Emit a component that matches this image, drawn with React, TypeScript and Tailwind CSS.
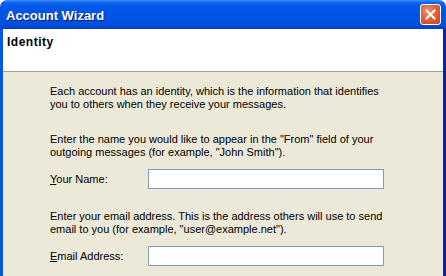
import React from "react";

function CloseButton() {
  return (
    <div className="w-[21px] h-[21px] rounded-[3px] border border-white bg-[radial-gradient(circle_at_35%_30%,#f0906c_0%,#e2603a_45%,#c8431f_100%)] flex items-center justify-center">
      <svg width="11" height="11" viewBox="0 0 11 11">
        <path d="M1.5 1.5 L9.5 9.5 M9.5 1.5 L1.5 9.5" stroke="white" strokeWidth="2.2" strokeLinecap="square" />
      </svg>
    </div>
  );
}

export default function App() {
  return (
    <div className="w-[446px] h-[276px] overflow-hidden bg-white font-['Liberation_Sans',Arial,sans-serif] text-black">
      <div className="flex flex-col h-full">
        <div className="h-[29px] shrink-0 rounded-t-[7px] bg-[linear-gradient(180deg,#3d8ff8_0%,#0a62ee_10%,#0056e6_30%,#0054e3_60%,#004ddb_85%,#003fc8_100%)] flex items-center justify-between pl-[6px] pr-[5px]">
          <span className="text-white font-bold text-[13px] leading-none [text-shadow:1px_1px_0_#0a1f7a] pt-[1px]">
            Account Wizard
          </span>
          <CloseButton />
        </div>
        <div className="flex-1 flex flex-col border-l-[3px] border-r-[3px] border-l-[#0757e3] border-r-[#0a24b0]">
          <div className="h-[43px] shrink-0 bg-white border-b border-[#a0a0a0] pl-[4px] pt-[6px]">
            <div className="font-bold text-[12px] leading-[14px] tracking-[0.5px]">Identity</div>
          </div>
          <div className="flex-1 bg-[#ece9d8] pl-[47px] pt-[13px] text-[11px] leading-[13px]">
            <div className="whitespace-nowrap">
              <div>Each account has an identity, which is the information that identifies</div>
              <div>you to others when they receive your messages.</div>
            </div>
            <div className="whitespace-nowrap mt-[22px]">
              <div>Enter the name you would like to appear in the "From" field of your</div>
              <div>outgoing messages (for example, "John Smith").</div>
            </div>
            <div className="flex items-center mt-[10px]">
              <label className="w-[98px]">
                <u>Y</u>our Name:
              </label>
              <div className="w-[236px] h-[20px] bg-white border border-[#7f9db9]" />
            </div>
            <div className="whitespace-nowrap mt-[21px]">
              <div>Enter your email address. This is the address others will use to send</div>
              <div>email to you (for example, "user@example.net").</div>
            </div>
            <div className="flex items-center mt-[10px]">
              <label className="w-[98px]">
                <u>E</u>mail Address:
              </label>
              <div className="w-[236px] h-[20px] bg-white border border-[#7f9db9]" />
            </div>
          </div>
        </div>
      </div>
    </div>
  );
}
